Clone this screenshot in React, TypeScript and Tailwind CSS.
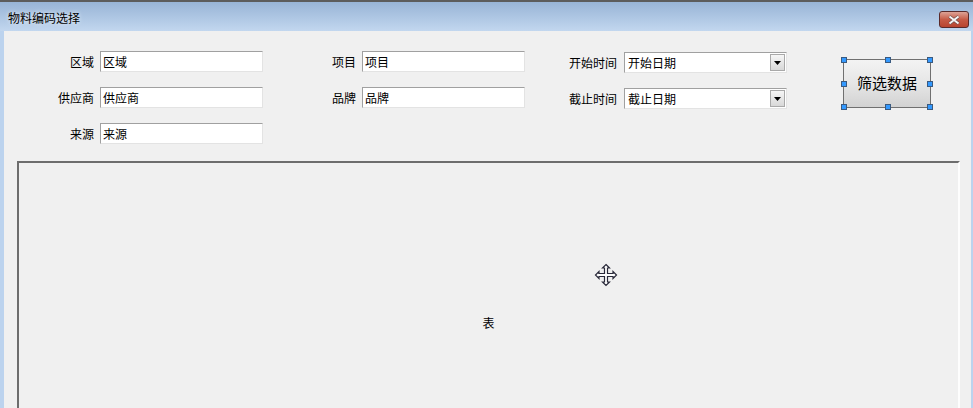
import React from "react";

const font = { fontFamily: '"Noto Sans CJK SC", "Liberation Sans", sans-serif' };

function Field({ label, value, labelW }: { label: string; value: string; labelW: string }) {
  return (
    <div className="flex items-center h-[21px]">
      <div className={`${labelW} text-right text-[12px] text-black pr-[6px] leading-none`}>{label}</div>
      <div className="w-[163px] h-[21px] bg-white border border-t-[#a0a0a0] border-l-[#a0a0a0] border-r-[#e3e3e3] border-b-[#e3e3e3] flex items-center pl-[2px] text-[12px] text-black leading-none">
        {value}
      </div>
    </div>
  );
}

function DateSelect({ label, value }: { label: string; value: string }) {
  return (
    <div className="flex items-center h-[21px]">
      <div className="w-[99px] text-right text-[12px] text-black pr-[7px] leading-none">{label}</div>
      <div className="w-[163px] h-[21px] bg-white border border-t-[#a0a0a0] border-l-[#a0a0a0] border-r-[#e3e3e3] border-b-[#e3e3e3] flex items-center text-[12px] text-black leading-none">
        <span className="flex-1 pl-[3px]">{value}</span>
        <div className="w-[15px] h-[17px] mr-[1px] border border-[#a9a9a9] bg-gradient-to-b from-[#f6f6f6] to-[#d8d8d8] flex items-center justify-center">
          <svg width="7" height="4" viewBox="0 0 7 4">
            <path d="M0 0h7L3.5 4z" fill="#000" />
          </svg>
        </div>
      </div>
    </div>
  );
}

function MoveCursor() {
  return (
    <svg width="24" height="24" viewBox="0 0 24 24">
      <path
        d="M12 1.5 L15.5 5 L13.5 5 L13.5 10.5 L19 10.5 L19 8.5 L22.5 12 L19 15.5 L19 13.5 L13.5 13.5 L13.5 19 L15.5 19 L12 22.5 L8.5 19 L10.5 19 L10.5 13.5 L5 13.5 L5 15.5 L1.5 12 L5 8.5 L5 10.5 L10.5 10.5 L10.5 5 L8.5 5 Z"
        fill="#fff"
        stroke="#2a2a3a"
        strokeWidth="1.2"
        strokeLinejoin="miter"
      />
    </svg>
  );
}

export default function App() {
  const handles = [
    "left-[-3px] top-[-3px]",
    "left-[41px] top-[-3px]",
    "right-[-3px] top-[-3px]",
    "left-[-3px] top-[21px]",
    "right-[-3px] top-[21px]",
    "left-[-3px] bottom-[-3px]",
    "left-[41px] bottom-[-3px]",
    "right-[-3px] bottom-[-3px]",
  ];

  return (
    <div className="w-[973px] h-[408px] overflow-hidden flex flex-col bg-[#bcd3ee]" style={font}>
      {/* 标题栏 */}
      <div className="h-[31px] shrink-0 border-t-2 border-[#5c5c5c] bg-gradient-to-b from-[#98b4d6] to-[#c2d7ef] flex items-center justify-between pl-[8px] pr-[4px]">
        <span className="text-[12px] text-black leading-none mt-[2px] [text-shadow:0_0_4px_rgba(255,255,255,0.9)]">物料编码选择</span>
        <div className="w-[30px] h-[17px] mt-[6px] rounded-[3px] border border-[#5a2a2a] bg-gradient-to-b from-[#dca296] via-[#c65a45] to-[#b8442f] flex items-center justify-center">
          <svg width="12" height="10" viewBox="0 0 12 10">
            <path d="M1.5 1.5 L10.5 8.5 M10.5 1.5 L1.5 8.5" stroke="#6a4a48" strokeWidth="3.4" />
            <path d="M1.5 1.5 L10.5 8.5 M10.5 1.5 L1.5 8.5" stroke="#f6f6f6" strokeWidth="2" />
          </svg>
        </div>
      </div>

      {/* 内容区 */}
      <div className="flex-1 ml-[4px] mr-[2px] bg-[#f0f0f0] flex flex-col">
        <div className="flex pt-[20px]">
          <div className="flex flex-col gap-[15px]">
            <Field label="区域" value="区域" labelW="w-[96px]" />
            <Field label="供应商" value="供应商" labelW="w-[96px]" />
            <Field label="来源" value="来源" labelW="w-[96px]" />
          </div>
          <div className="flex flex-col gap-[15px]">
            <Field label="项目" value="项目" labelW="w-[99px]" />
            <Field label="品牌" value="品牌" labelW="w-[99px]" />
          </div>
          <div className="flex flex-col gap-[15px] mt-[1px]">
            <DateSelect label="开始时间" value="开始日期" />
            <DateSelect label="截止时间" value="截止日期" />
          </div>
          <div className="ml-[56px] mt-[8px]">
            <div className="relative w-[88px] h-[49px] border border-[#707070] bg-gradient-to-b from-[#f3f3f3] via-[#e6e6e6] to-[#d2d2d2] flex items-center justify-center text-[15px] text-black">
              筛选数据
              {handles.map((h) => (
                <span key={h} className={`absolute ${h} w-[6px] h-[6px] bg-[#3399ff] border border-[#3a5a80]`} />
              ))}
            </div>
          </div>
        </div>

        {/* 表格 */}
        <div className="relative mt-[17px] ml-[13px] w-[943px] h-[260px] border-t-2 border-l-2 border-t-[#6d6d6d] border-l-[#6d6d6d] border-r-2 border-r-[#fdfdfd] bg-[#f0f0f0] flex justify-center pt-[154px]">
          <span className="text-[12px] text-black leading-none">表</span>
          <div className="absolute left-[575px] top-[100px]">
            <MoveCursor />
          </div>
        </div>
      </div>
    </div>
  );
}
